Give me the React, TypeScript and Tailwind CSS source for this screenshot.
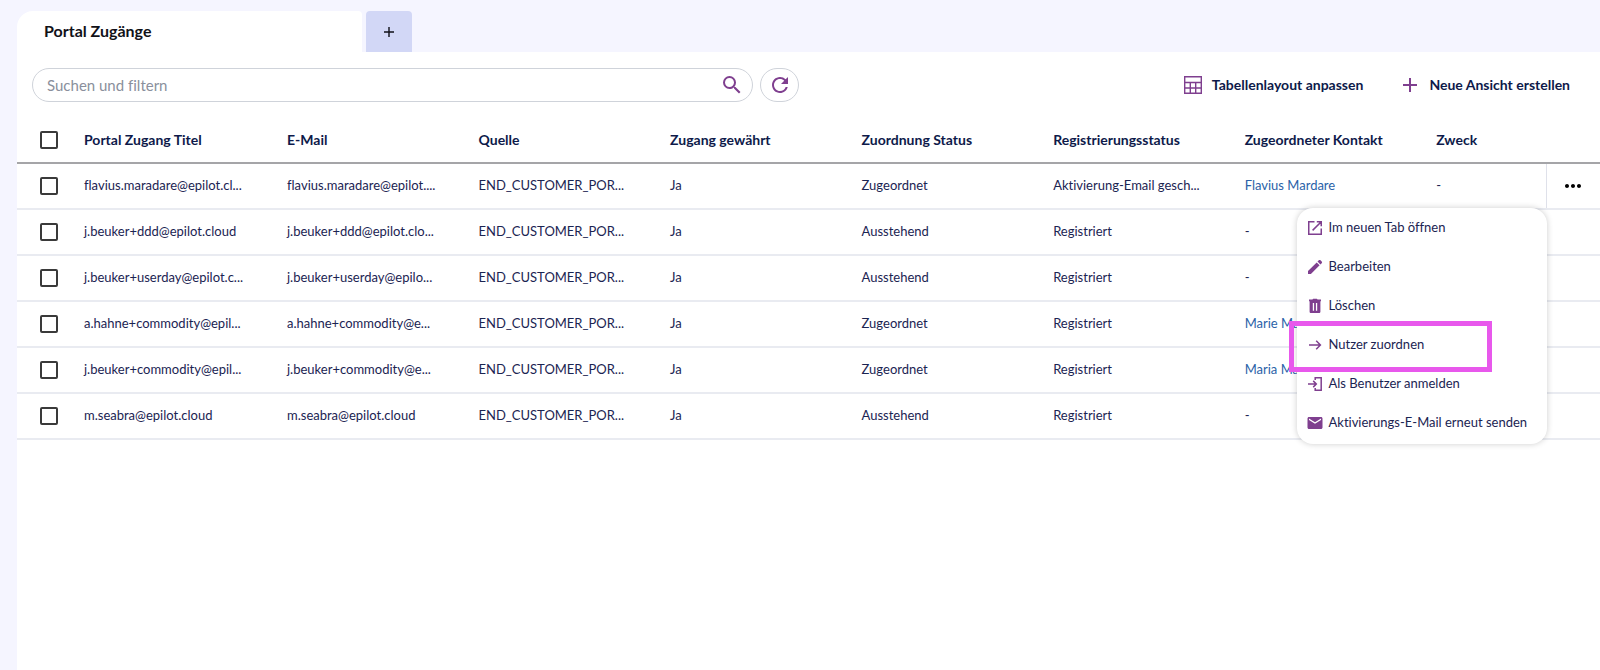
import React, { useState } from 'react';
import { MdEmail, MdMoreHoriz, MdRefresh, MdSearch } from 'react-icons/md';

interface Access {
  title: string;
  email: string;
  status: string;
  registration: string;
  contact?: string;
}

const ACCESSES: Access[] = [
  { title: 'flavius.maradare@epilot.cl...', email: 'flavius.maradare@epilot....', status: 'Zugeordnet', registration: 'Aktivierung-Email gesch...', contact: 'Flavius Mardare' },
  { title: 'j.beuker+ddd@epilot.cloud', email: 'j.beuker+ddd@epilot.clo...', status: 'Ausstehend', registration: 'Registriert' },
  { title: 'j.beuker+userday@epilot.c...', email: 'j.beuker+userday@epilo...', status: 'Ausstehend', registration: 'Registriert' },
  { title: 'a.hahne+commodity@epil...', email: 'a.hahne+commodity@e...', status: 'Zugeordnet', registration: 'Registriert', contact: 'Marie Ma' },
  { title: 'j.beuker+commodity@epil...', email: 'j.beuker+commodity@e...', status: 'Zugeordnet', registration: 'Registriert', contact: 'Maria Ma' },
  { title: 'm.seabra@epilot.cloud', email: 'm.seabra@epilot.cloud', status: 'Ausstehend', registration: 'Registriert' },
];

const COLUMNS = [
  'Portal Zugang Titel',
  'E-Mail',
  'Quelle',
  'Zugang gewährt',
  'Zuordnung Status',
  'Registrierungsstatus',
  'Zugeordneter Kontakt',
  'Zweck',
];

function TableIcon() {
  return (
    <svg width="18" height="18" viewBox="0 0 18 18" fill="none" stroke="currentColor" strokeWidth="1.4">
      <path d="M.7 .7h16.6v16.6H.7zM.7 6.5h16.6M.7 12h16.6M6.3 6.5v10.8M11.7 6.5v10.8" />
    </svg>
  );
}

function PlusIcon({ size }: { size: number }) {
  return (
    <svg width={size} height={size} viewBox="0 0 14 14" fill="none" stroke="currentColor" strokeWidth="2">
      <path d="M7 0v14M0 7h14" />
    </svg>
  );
}

function OpenIcon() {
  return (
    <svg width="16" height="16" viewBox="0 0 16 16" fill="none" stroke="currentColor" strokeWidth="1.5">
      <path d="M7.5 1.75H1.75v12.5h12.5V8.5M9.8 1.75h4.45V6.2M14 2 5.6 10.4" />
    </svg>
  );
}

function PencilIcon() {
  return (
    <svg width="16" height="16" viewBox="0 0 16 16" fill="currentColor">
      <path d="M1 15v-2.9l8.7-8.7 2.9 2.9L3.9 15zM10.5 2.6l1.3-1.3c.5-.5 1.2-.5 1.7 0l1.2 1.2c.5.5.5 1.2 0 1.7l-1.3 1.3z" />
    </svg>
  );
}

function TrashIcon() {
  return (
    <svg width="16" height="16" viewBox="0 0 16 16" fill="currentColor" fillRule="evenodd">
      <path d="M2 1.6h3.4L6.2.8h3.6l.8.8H14v1.6H2zM2.6 3.2h10.8v10.5c0 .8-.6 1.4-1.4 1.4H4c-.8 0-1.4-.6-1.4-1.4zM5.8 5v7.8h1.3V5zM8.9 5v7.8h1.3V5z" />
    </svg>
  );
}

function ArrowIcon() {
  return (
    <svg width="16" height="16" viewBox="0 0 16 16" fill="none" stroke="currentColor" strokeWidth="1.5">
      <path d="M2 8h11.4M9.2 3.8 13.4 8l-4.2 4.2" />
    </svg>
  );
}

function LoginIcon() {
  return (
    <svg width="16" height="16" viewBox="0 0 16 16" fill="none" stroke="currentColor" strokeWidth="1.5">
      <path d="M1 8h8.2M6.2 4.9 9.3 8l-3.1 3.1M8.2 4V1.75h6v12.5h-6V12" />
    </svg>
  );
}

const ACTIONS = [
  { label: 'Im neuen Tab öffnen', icon: <OpenIcon /> },
  { label: 'Bearbeiten', icon: <PencilIcon /> },
  { label: 'Löschen', icon: <TrashIcon /> },
  { label: 'Nutzer zuordnen', icon: <ArrowIcon />, highlighted: true },
  { label: 'Als Benutzer anmelden', icon: <LoginIcon /> },
  { label: 'Aktivierungs-E-Mail erneut senden', icon: <MdEmail size={18} /> },
];

function RowMenu() {
  return (
    <div
      role="menu"
      className="absolute top-[44px] right-full z-10 w-[250px] rounded-2xl bg-white pb-0.5 shadow-[0_0_6px_rgba(0,0,0,0.2)]"
    >
      {ACTIONS.map((action) => (
        <div key={action.label} className="relative">
          <button
            type="button"
            role="menuitem"
            className="flex h-[39px] w-full items-center gap-1 pl-2 text-left whitespace-nowrap"
          >
            <span className="flex w-5 justify-center text-[#7f3f8f]">{action.icon}</span>
            {action.label}
          </button>
          {action.highlighted && (
            <div className="pointer-events-none absolute -top-1 right-[55px] -bottom-2 -left-2 border-[5px] border-[#e858ec]" />
          )}
        </div>
      ))}
    </div>
  );
}

function Checkbox({ label }: { label: string }) {
  return (
    <input
      type="checkbox"
      aria-label={label}
      className="mx-auto block size-[18px] appearance-none rounded-xs border-2 border-[#3a3a3a] bg-white checked:bg-[#7f3f8f]"
    />
  );
}

function AccessRow({ access, menuOpen, onToggleMenu }: { access: Access; menuOpen: boolean; onToggleMenu: () => void }) {
  return (
    <tr className="h-[46px] border-b-2 border-[#e9ebf1]">
      <td className="pl-3">
        <Checkbox label={access.title} />
      </td>
      <td className="px-4">{access.title}</td>
      <td className="px-4">{access.email}</td>
      <td className="px-4">END_CUSTOMER_POR...</td>
      <td className="px-4">Ja</td>
      <td className="px-4">{access.status}</td>
      <td className="px-4">{access.registration}</td>
      <td className="px-4">
        {access.contact ? (
          <a href="#" className="text-[#2a62a8]">{access.contact}</a>
        ) : (
          '-'
        )}
      </td>
      <td className="px-4">{menuOpen && '-'}</td>
      <td className={menuOpen ? 'relative border-l border-[#dfe1ea]' : ''}>
        {menuOpen && (
          <>
            <button type="button" aria-label="Aktionen" onClick={onToggleMenu} className="mx-auto block text-black">
              <MdMoreHoriz size={24} />
            </button>
            <RowMenu />
          </>
        )}
      </td>
    </tr>
  );
}

export default function App() {
  const [query, setQuery] = useState('');
  const [openRow, setOpenRow] = useState(0);

  return (
    <div className="min-h-screen bg-[#f5f5ff] pt-[11px] pl-[17px] font-['Lato',sans-serif] text-[13px] text-[#1b2452] [font-variant-ligatures:none]">
      <div className="flex h-[41px] gap-1">
        <button type="button" className="w-[345px] rounded-tl-2xl rounded-tr-sm bg-white pb-0.5 pl-[27px] text-left text-base font-bold text-[#111118]">
          Portal Zugänge
        </button>
        <button type="button" aria-label="Neuer Tab" className="flex w-[46px] items-center justify-center rounded-t-sm bg-[#d2d7f6] text-[#111118]">
          <PlusIcon size={10} />
        </button>
      </div>

      <main className="min-h-[calc(100vh-52px)] bg-white">
        <div className="flex items-center gap-[7px] pt-4 pr-[30px] pl-[15px]">
          <div className="flex h-[34px] w-[721px] items-center rounded-full border border-[#cfd3da] pr-2 pl-[14px]">
            <input
              type="text"
              aria-label="Suchen und filtern"
              placeholder="Suchen und filtern"
              value={query}
              onChange={(e) => setQuery(e.target.value)}
              className="min-w-0 flex-1 text-[15px] outline-none placeholder:text-[#8a8f9c]"
            />
            <button type="button" aria-label="Suchen" className="text-[#7f3f8f]">
              <MdSearch size={24} />
            </button>
          </div>
          <button type="button" aria-label="Aktualisieren" className="flex h-[34px] w-[39px] items-center justify-center rounded-full border border-[#cfd3da] text-[#7f3f8f]">
            <MdRefresh size={24} />
          </button>
          <div className="ml-auto flex gap-10 text-sm font-bold text-[#0e1a4a]">
            <button type="button" className="flex items-center gap-2.5">
              <span className="text-[#7f3f8f]"><TableIcon /></span>
              Tabellenlayout anpassen
            </button>
            <button type="button" className="flex items-center gap-3">
              <span className="text-[#7f3f8f]"><PlusIcon size={14} /></span>
              Neue Ansicht erstellen
            </button>
          </div>
        </div>

        <table className="mt-[15px] w-full table-fixed border-collapse whitespace-nowrap">
          <colgroup>
            <col className="w-[51px]" />
            <col className="w-[203px]" />
            <col className="w-[12.1%]" />
            <col className="w-[12.1%]" />
            <col className="w-[12.1%]" />
            <col className="w-[12.1%]" />
            <col className="w-[12.1%]" />
            <col className="w-[12.1%]" />
            <col />
            <col className="w-[54px]" />
          </colgroup>
          <thead>
            <tr className="h-[46px] border-b-2 border-[#a5a5a8] text-sm text-[#0e1a4a]">
              <th className="pl-3">
                <Checkbox label="Alle auswählen" />
              </th>
              {COLUMNS.map((column) => (
                <th key={column} className="px-4 text-left font-bold">{column}</th>
              ))}
              <th />
            </tr>
          </thead>
          <tbody>
            {ACCESSES.map((access, index) => (
              <AccessRow
                key={access.title}
                access={access}
                menuOpen={openRow === index}
                onToggleMenu={() => setOpenRow(index)}
              />
            ))}
          </tbody>
        </table>
      </main>
    </div>
  );
}
